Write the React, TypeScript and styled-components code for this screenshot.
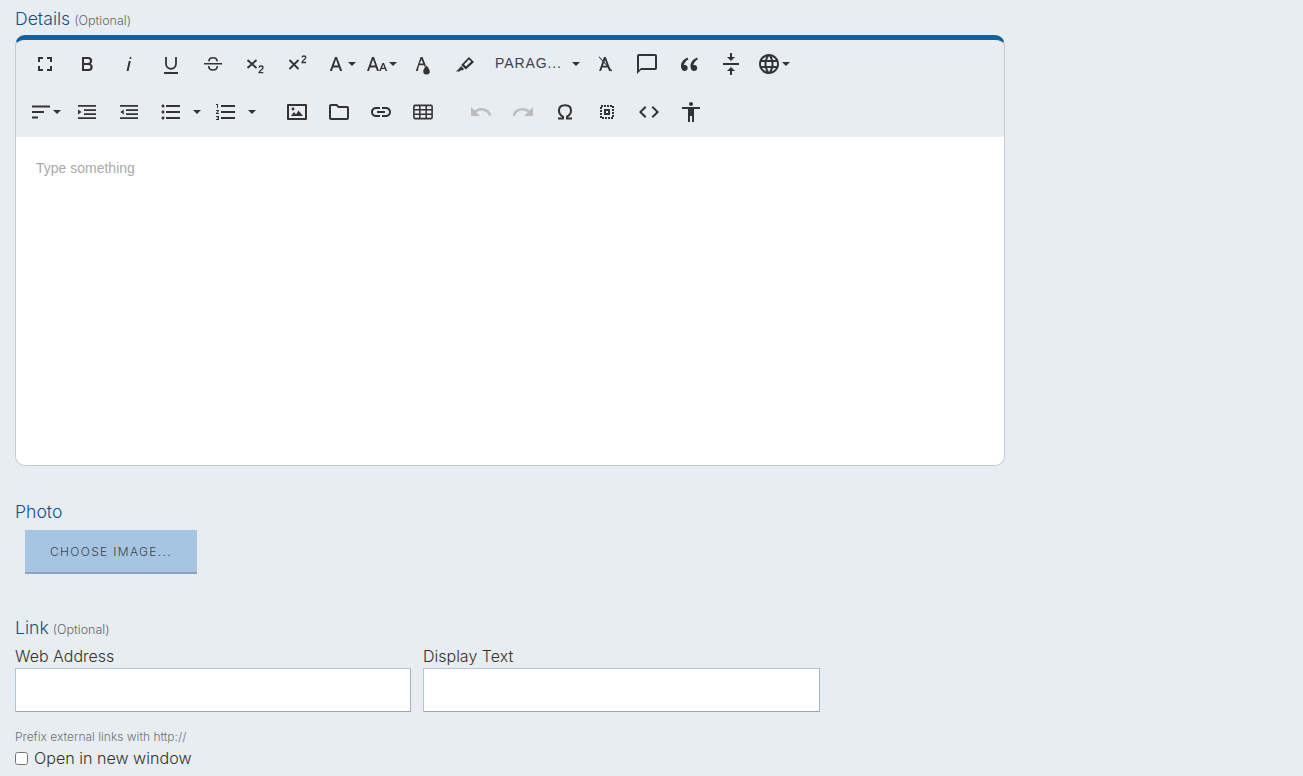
import React from "react";
import styled, { createGlobalStyle } from "styled-components";
import {
  MdFullscreen,
  MdVerticalAlignCenter,
  MdLanguage,
  MdChatBubbleOutline,
  MdFormatListBulleted,
  MdFormatListNumbered,
  MdOutlineFolder,
  MdLink,
  MdUndo,
  MdRedo,
  MdCode,
  MdAccessibility,
} from "react-icons/md";

const GlobalStyle = createGlobalStyle`
  html, body { margin: 0; padding: 0; background: #e8edf1; }
  body { font-family: "Inter", "Noto Sans", sans-serif; color: #3c3c3c; }
`;

const Page = styled.div`
  width: 1303px;
  height: 776px;
  padding: 10px 0 0 15px;
  box-sizing: border-box;
  overflow: hidden;
`;

const SectionLabel = styled.div<{ $mt?: number }>`
  font-size: 17.6px;
  font-weight: 350;
  line-height: 18px;
  height: 18px;
  color: #164f86;
  margin-top: ${(p) => p.$mt ?? 0}px;
`;

const Optional = styled.span`
  font-size: 12.5px;
  font-weight: 300;
  color: #66686c;
  margin-left: 4px;
`;

const Editor = styled.div`
  width: 990px;
  height: 431px;
  margin-top: 7px;
  box-sizing: border-box;
  border: 1px solid #c8cacc;
  border-top: 5px solid #13609c;
  border-radius: 10px;
  display: flex;
  flex-direction: column;
  overflow: hidden;
`;

const Toolbar = styled.div`
  padding: 0 8px;
  height: 97px;
  flex: none;
`;

const Row = styled.div`
  display: flex;
  align-items: center;
  height: 48px;
`;

const ToolButton = styled.div<{ $w?: number; $pad?: number; $mr?: number; $muted?: boolean }>`
  width: ${(p) => p.$w ?? 42}px;
  height: 40px;
  flex: none;
  display: flex;
  align-items: center;
  justify-content: ${(p) => (p.$pad === undefined ? "center" : "flex-start")};
  padding-left: ${(p) => p.$pad ?? 0}px;
  margin-right: ${(p) => p.$mr ?? 0}px;
  box-sizing: border-box;
  color: ${(p) => (p.$muted ? "#bdbdbd" : "#333")};
  svg { display: block; flex: none; }
`;

const Caret = styled.span<{ $ml?: number }>`
  width: 0;
  height: 0;
  flex: none;
  margin-left: ${(p) => p.$ml ?? 0}px;
  border-left: 4px solid transparent;
  border-right: 4px solid transparent;
  border-top: 4px solid #333;
`;

const ParagraphLabel = styled.span`
  font-family: "Liberation Sans", Arial, sans-serif;
  font-size: 14px;
  letter-spacing: 0.9px;
  color: #3a4250;
  width: 77px;
  margin-bottom: 2px;
  white-space: nowrap;
`;

const EditArea = styled.div`
  flex: 1;
  background: #fff;
  padding: 23px 20px;
  font-family: "Liberation Sans", Arial, sans-serif;
  font-size: 14px;
  line-height: 16px;
  color: #aaa;
`;

const ChooseButton = styled.div`
  width: 172px;
  height: 44px;
  margin: 9px 0 0 10px;
  box-sizing: border-box;
  background: #a6c5e3;
  border-bottom: 2px solid #8aa5c3;
  color: #3c434b;
  font-size: 12px;
  font-weight: 350;
  letter-spacing: 1.35px;
  display: flex;
  align-items: center;
  justify-content: center;
`;

const Fields = styled.div`
  display: flex;
  gap: 12px;
  margin-top: 10px;
`;

const Field = styled.div<{ $w: number }>`
  width: ${(p) => p.$w}px;
`;

const FieldLabel = styled.div`
  font-size: 16px;
  font-weight: 300;
  line-height: 18px;
  height: 18px;
  color: #33322e;
`;

const TextBox = styled.div`
  height: 44px;
  margin-top: 3px;
  box-sizing: border-box;
  background: #fff;
  border: 1px solid #b6c5d6;
  border-bottom-color: #98a3ae;
  border-right-color: #a5b1bd;
`;

const Hint = styled.div`
  font-size: 12px;
  font-weight: 300;
  line-height: 14px;
  color: #6f7276;
  margin-top: 18px;
`;

const CheckRow = styled.label`
  display: flex;
  align-items: center;
  height: 18px;
  margin-top: 5px;
  font-size: 16.1px;
  font-weight: 300;
  color: #33322e;
`;

const Check = styled.input`
  width: 13px;
  height: 13px;
  margin: 0 6px 0 0;
`;

type P = { children: React.ReactNode };
const Ico = ({ children }: P) => (
  <svg width={24} height={24} viewBox="0 0 24 24" fill="currentColor">
    {children}
  </svg>
);
const Stroke = ({ children }: P) => (
  <svg width={24} height={24} viewBox="0 0 24 24" fill="none" stroke="currentColor" strokeWidth={1.8}>
    {children}
  </svg>
);

const BoldIcon = () => (
  <Ico><path d="M15.6 11.8c1-.7 1.6-1.8 1.6-2.8a4 4 0 0 0-4-4H7v14h7c2.1 0 3.7-1.7 3.7-3.8 0-1.5-.8-2.8-2.1-3.4zM9 7h4a2 2 0 1 1 0 4H9V7zm4.5 10H9v-4h4.5a2 2 0 1 1 0 4z" /></Ico>
);
const ItalicIcon = () => (
  <Ico><path d="M11.76 9h2L11.56 19h-2l2.2-10zm1.68-4a1 1 0 1 0 0 2 1 1 0 0 0 0-2z" /></Ico>
);
const UnderlineIcon = () => (
  <Stroke>
    <path d="M7 5v6.8a5 5 0 0 0 10 0V5" />
    <path d="M5 21h14" strokeWidth={2} />
  </Stroke>
);
const StrikeIcon = () => (
  <Stroke>
    <path d="M3 11.8h18" strokeWidth={1.4} />
    <path d="M16.3 9.4C16 7 14.3 5.8 12 5.8S8 7 7.8 9.4M16.3 14c0 2.5-1.8 4-4.3 4s-4.3-1.5-4.3-4" strokeWidth={1.6} />
  </Stroke>
);
const SubIcon = () => (
  <Stroke>
    <path d="M4.5 8l9 8M13.5 8l-9 8" />
    <path d="M16 15.6c.2-1 1-1.6 2-1.6 1.2 0 2 .7 2 1.7 0 2-4 2.6-4 5h4.3" strokeWidth={1.3} />
  </Stroke>
);
const SupIcon = () => (
  <Stroke>
    <path d="M4.5 8l9 9M13.5 8l-9 9" />
    <path d="M17 5.4c.2-.9.9-1.4 1.9-1.4 1.1 0 1.9.7 1.9 1.6 0 1.9-3.8 2.4-3.8 4.9h4.1" strokeWidth={1.3} />
  </Stroke>
);
const LetterIcon = () => (
  <Ico><path d="M11 5h2l5.2 14h-2.1l-1.3-3.6H9.2L7.9 19H5.8L11 5zm-1.1 8.6h4.2L12 7.6l-2.1 6z" /></Ico>
);
const SizeIcon = () => (
  <Ico><path d="M8 5h2l5 14h-2l-1.2-3.6H6.2L5 19H3L8 5zm-1.1 8.6h4.3L9 7.6l-2.1 6zM18.4 11h1.6l3.2 8h-1.6l-.7-2h-3.4l-.7 2h-1.6l3.2-8zm-.4 4.8h2.4l-1.2-3.2-1.2 3.2z" /></Ico>
);
const TextColorIcon = () => (
  <Ico>
    <path d="M9.6 5h1.9l3.3 8.6-1 1.6-.8-2H8.1L6.8 19h-2L9.6 5zm-.9 6.6h3.4L10.5 7.4l-1.8 4.2z" />
    <path d="M15.5 13.4s-3.3 3.5-3.3 5.9a3.3 3.3 0 0 0 6.6 0c0-2.4-3.3-5.9-3.3-5.9z" />
  </Ico>
);
const HighlightIcon = () => (
  <Ico>
    <path d="M16 5l5 5-8.2 7.5-4.6-4.6L16 5zm0 2.6l-5 4.9 2 2 5.2-4.9L16 7.6z" />
    <path d="M8 14l3 3-1.5 1.5-1.4-.6L6.5 19.5H3l3.4-3.3L8 14z" />
  </Ico>
);
const ClearIcon = () => (
  <Ico>
    <path d="M11 5h1.8l5.2 14h-1.9l-1.3-3.6H9.3L8 19H6.1L11 5zm-1.1 8.8h4.2L12 8l-2.1 5.8z" />
    <path d="M5.6 5.1l.7-.7 13 14.4-.7.7z" />
  </Ico>
);
const QuoteIcon = () => (
  <Ico>
    <path d="M10.5 5.5C7 7.2 4 9.8 4 14c0 2.9 1.3 5 3.5 5 1.8 0 3.2-1.3 3.2-3.1 0-1.7-1.2-3-2.8-3-.4 0-.7.1-1 .2.3-2.2 2-4.2 4.4-5.5zM20 5.5c-3.5 1.7-6.5 4.3-6.5 8.5 0 2.9 1.3 5 3.5 5 1.8 0 3.2-1.3 3.2-3.1 0-1.7-1.2-3-2.8-3-.4 0-.7.1-1 .2.3-2.2 2-4.2 4.4-5.5z" />
  </Ico>
);
const AlignIcon = () => (
  <Ico><path d="M3 5.5h18v2H3zM3 11h12v2H3zM3 16.5h6v2H3z" /></Ico>
);
const IndentIcon = () => (
  <Ico><path d="M3 5h18v1.8H3zM9 9.2h12V11H9zM9 13.2h12V15H9zM3 17.2h18V19H3zM3 9.5l3.5 2.5L3 14.5z" /></Ico>
);
const OutdentIcon = () => (
  <Ico><path d="M3 5h18v1.8H3zM9 9.2h12V11H9zM9 13.2h12V15H9zM3 17.2h18V19H3zM6.8 9.5L3.3 12l3.5 2.5z" /></Ico>
);
const ImageIcon = () => (
  <Ico>
    <path fillRule="evenodd" d="M3 4h18a1 1 0 0 1 1 1v14a1 1 0 0 1-1 1H3a1 1 0 0 1-1-1V5a1 1 0 0 1 1-1zm1 2v12h16V6H4z" />
    <path d="M6 16l3-4 2 2.5 2.5-4 4.5 5.5z" />
    <circle cx="8" cy="9" r="1.4" />
  </Ico>
);
const TableIcon = () => (
  <Stroke>
    <rect x="2.9" y="5.4" width="18.2" height="13.2" rx="1" strokeWidth={1.6} />
    <path d="M3 9.8h18M3 14.2h18M8.8 5.5v13M15.2 5.5v13" strokeWidth={1.5} />
  </Stroke>
);
const OmegaIcon = () => (
  <Stroke>
    <path d="M5 18.6h5v-2C7.6 15.4 6 13.3 6 10.5 6 7 8.6 5.2 12 5.2S18 7 18 10.5c0 2.8-1.6 4.9-4 6.1v2h5" strokeWidth={2} />
  </Stroke>
);
const SelectIcon = () => (
  <Stroke>
    <rect x="6" y="6" width="12" height="12" strokeWidth={2} strokeDasharray="2 1" />
    <path fillRule="evenodd" stroke="none" fill="currentColor" d="M9 9h6v6H9zm2 2v2h2v-2z" />
  </Stroke>
);

export default function App() {
  return (
    <Page>
      <GlobalStyle />
      <SectionLabel>
        Details<Optional>(Optional)</Optional>
      </SectionLabel>
      <Editor>
        <Toolbar>
          <Row>
            <ToolButton><MdFullscreen size={24} /></ToolButton>
            <ToolButton><BoldIcon /></ToolButton>
            <ToolButton><ItalicIcon /></ToolButton>
            <ToolButton><UnderlineIcon /></ToolButton>
            <ToolButton><StrikeIcon /></ToolButton>
            <ToolButton><SubIcon /></ToolButton>
            <ToolButton><SupIcon /></ToolButton>
            <ToolButton $w={40} $pad={6}><LetterIcon /><Caret /></ToolButton>
            <ToolButton $w={44} $pad={6}><SizeIcon /><Caret $ml={1} /></ToolButton>
            <ToolButton><TextColorIcon /></ToolButton>
            <ToolButton><HighlightIcon /></ToolButton>
            <ToolButton $w={98} $pad={9}><ParagraphLabel>PARAG...</ParagraphLabel><Caret /></ToolButton>
            <ToolButton><ClearIcon /></ToolButton>
            <ToolButton><MdChatBubbleOutline size={24} /></ToolButton>
            <ToolButton><QuoteIcon /></ToolButton>
            <ToolButton $mr={-1}><MdVerticalAlignCenter size={24} /></ToolButton>
            <ToolButton $w={44} $pad={6}><MdLanguage size={24} /><Caret $ml={1} /></ToolButton>
          </Row>
          <Row>
            <ToolButton $pad={5}><AlignIcon /><Caret /></ToolButton>
            <ToolButton><IndentIcon /></ToolButton>
            <ToolButton><OutdentIcon /></ToolButton>
            <ToolButton><MdFormatListBulleted size={24} /></ToolButton>
            <ToolButton $w={13} $pad={1}><Caret /></ToolButton>
            <ToolButton $pad={9}><MdFormatListNumbered size={24} /></ToolButton>
            <ToolButton $w={13} $pad={1} $mr={16}><Caret /></ToolButton>
            <ToolButton><ImageIcon /></ToolButton>
            <ToolButton><MdOutlineFolder size={24} /></ToolButton>
            <ToolButton><MdLink size={24} /></ToolButton>
            <ToolButton $mr={16}><TableIcon /></ToolButton>
            <ToolButton $muted><MdUndo size={24} /></ToolButton>
            <ToolButton $muted><MdRedo size={24} /></ToolButton>
            <ToolButton><OmegaIcon /></ToolButton>
            <ToolButton><SelectIcon /></ToolButton>
            <ToolButton><MdCode size={24} /></ToolButton>
            <ToolButton><MdAccessibility size={24} /></ToolButton>
          </Row>
        </Toolbar>
        <EditArea>Type something</EditArea>
      </Editor>
      <SectionLabel $mt={37}>Photo</SectionLabel>
      <ChooseButton>CHOOSE IMAGE...</ChooseButton>
      <SectionLabel $mt={45}>
        Link<Optional>(Optional)</Optional>
      </SectionLabel>
      <Fields>
        <Field $w={396}>
          <FieldLabel>Web Address</FieldLabel>
          <TextBox />
        </Field>
        <Field $w={397}>
          <FieldLabel>Display Text</FieldLabel>
          <TextBox />
        </Field>
      </Fields>
      <Hint>Prefix external links with http://</Hint>
      <CheckRow>
        <Check type="checkbox" />
        Open in new window
      </CheckRow>
    </Page>
  );
}
